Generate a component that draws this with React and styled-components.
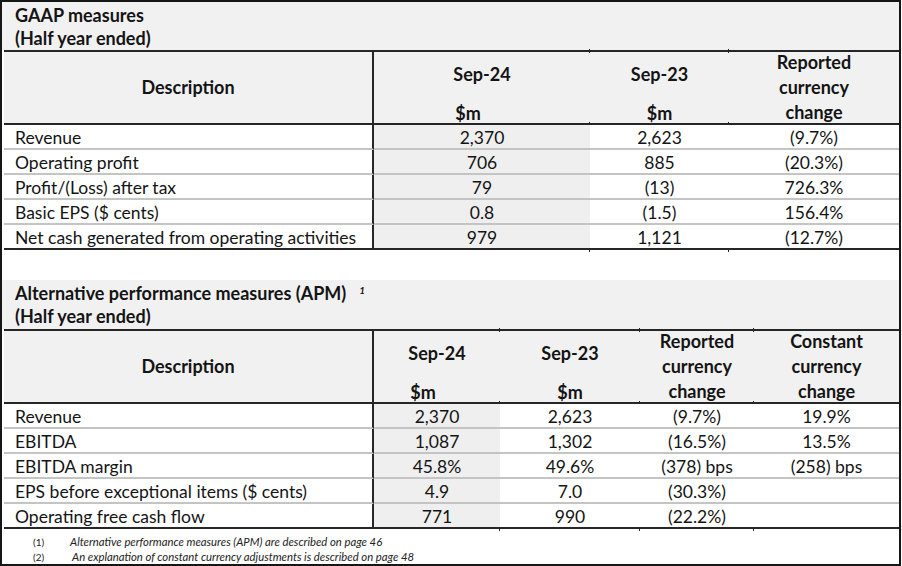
import React from 'react';
import styled, { createGlobalStyle } from 'styled-components';

const DARK = '#262626';
const HEAD_BG = '#f1f1f1';
const COL_BG = '#efefef';
const SEP = '#c4c4c4';
const FONT = 'Lato, "Liberation Sans", sans-serif';

const Global = createGlobalStyle`
  html, body { margin: 0; padding: 0; background: #fff; }
  body { font-family: ${FONT}; }
`;

const Frame = styled.div`
  width: 901px;
  height: 566px;
  box-sizing: border-box;
  border: 2px solid #161616;
  background: #fff;
  display: flex;
  flex-direction: column;
  font-family: ${FONT};
  color: #141414;
  overflow: hidden;
`;

const Section = styled.section`
  display: flex;
  flex-direction: column;
  margin-top: ${(p) => p.$gap || 0}px;
`;

const Title = styled.div`
  background: ${HEAD_BG};
  height: ${(p) => p.$h}px;
  box-sizing: border-box;
  padding: ${(p) => p.$pt}px 0 0 13px;
  font-weight: 700;
  font-size: 18px;
  line-height: 23px;
`;

const Sup = styled.span`
  font-size: 10px;
  font-style: italic;
  font-weight: 700;
  vertical-align: 6px;
  line-height: 0;
  margin-left: 13px;
`;

const Table = styled.div`
  display: grid;
  grid-template-columns: ${(p) => p.$cols};
  margin-left: 2px;
`;

const Tick = `
  content: '';
  position: absolute;
  left: -1px;
  width: 1px;
  height: 4px;
  background: ${DARK};
`;

const HeadCell = styled.div`
  position: relative;
  background: ${HEAD_BG};
  height: 75px;
  box-sizing: border-box;
  border-top: 2px solid ${DARK};
  border-bottom: 2px solid ${DARK};
  ${(p) => p.$divider && `border-right: 2px solid ${DARK};`}
  display: flex;
  flex-direction: column;
  align-items: center;
  justify-content: ${(p) => (p.$stack ? 'flex-end' : 'center')};
  font-weight: 700;
  font-size: 18px;
  line-height: 25px;
  text-align: center;
  white-space: nowrap;
  ${(p) =>
    p.$tick &&
    `&::before { ${Tick} top: -3px; } &::after { ${Tick} bottom: -3px; }`}
`;

const Stack = styled.div`
  display: flex;
  flex-direction: column;
  align-items: ${(p) => (p.$left ? 'flex-start' : 'center')};
  line-height: 22px;
  margin-bottom: -1px;
`;

const Period = styled.div`
  margin-bottom: 17px;
`;

const Unit = styled.div`
  padding-left: ${(p) => (p.$left ? 2 : 0)}px;
`;

const Cell = styled.div`
  position: relative;
  height: 25px;
  box-sizing: border-box;
  border-bottom: 2px solid ${(p) => (p.$last ? DARK : SEP)};
  background: ${(p) => (p.$shade ? COL_BG : '#fff')};
  ${(p) => p.$divider && `border-right: 2px solid ${DARK};`}
  display: flex;
  align-items: center;
  justify-content: ${(p) => (p.$label ? 'flex-start' : 'center')};
  padding: 2px 0 0 ${(p) => (p.$label ? 11 : 0)}px;
  font-size: 17.5px;
  line-height: 21px;
  white-space: nowrap;
  ${(p) => p.$tick && `&::after { ${Tick} bottom: -4px; }`}
`;

const Notes = styled.div`
  padding-top: 5px;
  display: flex;
  flex-direction: column;
`;

const Note = styled.div`
  display: flex;
  align-items: center;
  height: 15px;
  font-size: 11.3px;
  font-style: italic;
  color: #222;
`;

const NoteNum = styled.span`
  box-sizing: border-box;
  width: ${(p) => 68 + (p.$shift || 0)}px;
  padding-left: 31px;
  font-style: normal;
  font-size: 10px;
`;

const gaap = {
  cols: '370px 216px 139px 1fr',
  heads: [
    { kind: 'stack', top: 'Sep-24', unit: '$m', left: true },
    { kind: 'stack', top: 'Sep-23', unit: '$m' },
    { kind: 'lines', lines: ['Reported', 'currency', 'change'] },
  ],
  rows: [
    ['Revenue', '2,370', '2,623', '(9.7%)'],
    ['Operating profit', '706', '885', '(20.3%)'],
    ['Profit/(Loss) after tax', '79', '(13)', '726.3%'],
    ['Basic EPS ($ cents)', '0.8', '(1.5)', '156.4%'],
    ['Net cash generated from operating activities', '979', '1,121', '(12.7%)'],
  ],
};

const apm = {
  cols: '370px 126px 140px 114px 1fr',
  heads: [
    { kind: 'stack', top: 'Sep-24', unit: '$m', left: true },
    { kind: 'stack', top: 'Sep-23', unit: '$m' },
    { kind: 'lines', lines: ['Reported', 'currency', 'change'] },
    { kind: 'lines', lines: ['Constant', 'currency', 'change'] },
  ],
  rows: [
    ['Revenue', '2,370', '2,623', '(9.7%)', '19.9%'],
    ['EBITDA', '1,087', '1,302', '(16.5%)', '13.5%'],
    ['EBITDA margin', '45.8%', '49.6%', '(378) bps', '(258) bps'],
    ['EPS before exceptional items ($ cents)', '4.9', '7.0', '(30.3%)', ''],
    ['Operating free cash flow', '771', '990', '(22.2%)', ''],
  ],
};

function MeasureTable({ data }) {
  const last = data.rows.length - 1;
  return (
    <Table $cols={data.cols}>
      <HeadCell $divider>Description</HeadCell>
      {data.heads.map((h, i) => (
        <HeadCell key={i} $stack={h.kind === 'stack'} $tick={i > 0}>
          {h.kind === 'stack' ? (
            <Stack $left={h.left}>
              <Period>{h.top}</Period>
              <Unit $left={h.left}>{h.unit}</Unit>
            </Stack>
          ) : (
            h.lines.map((l) => <div key={l}>{l}</div>)
          )}
        </HeadCell>
      ))}
      {data.rows.map((row, r) =>
        row.map((v, c) => (
          <Cell
            key={`${r}-${c}`}
            $label={c === 0}
            $divider={c === 0}
            $shade={c === 1}
            $last={r === last}
            $tick={r === last && c > 1}
          >
            {v}
          </Cell>
        ))
      )}
    </Table>
  );
}

export default function App() {
  return (
    <>
      <Global />
      <Frame>
        <Section>
          <Title $h={48} $pt={2}>
            <div>GAAP measures</div>
            <div>(Half year ended)</div>
          </Title>
          <MeasureTable data={gaap} />
        </Section>
        <Section $gap={30}>
          <Title $h={49} $pt={2}>
            <div>
              Alternative performance measures (APM)<Sup>1</Sup>
            </div>
            <div>(Half year ended)</div>
          </Title>
          <MeasureTable data={apm} />
        </Section>
        <Notes>
          <Note>
            <NoteNum>(1)</NoteNum>
            Alternative performance measures (APM) are described on page 46
          </Note>
          <Note>
            <NoteNum $shift={2}>(2)</NoteNum>
            An explanation of constant currency adjustments is described on page 48
          </Note>
        </Notes>
      </Frame>
    </>
  );
}
